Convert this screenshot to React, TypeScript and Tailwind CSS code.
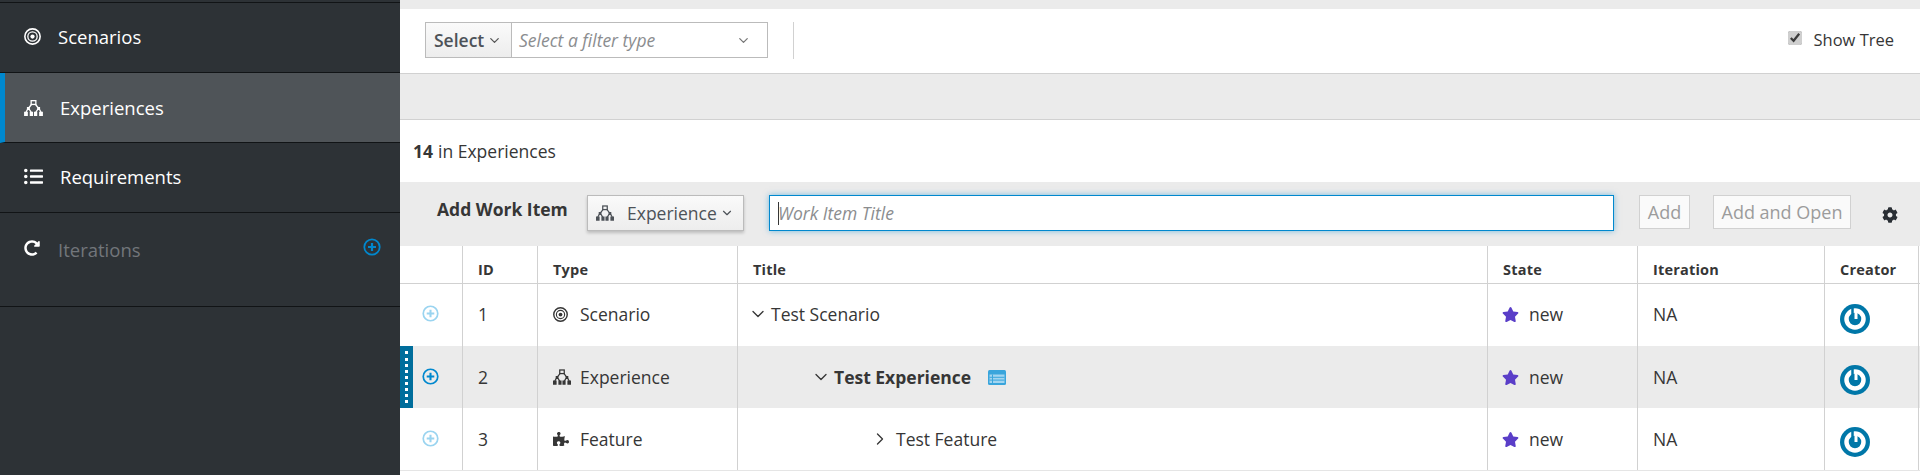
import React from 'react';
import { FaCog, FaListUl, FaPuzzlePiece, FaRedoAlt, FaStar } from 'react-icons/fa';
import { ChevronDown, ChevronRight } from 'lucide-react';

const TargetIcon = ({ className }: { className?: string }) => (
  <svg viewBox="0 0 16 16" className={className} fill="none" stroke="currentColor">
    <circle cx="8" cy="8" r="7.2" strokeWidth="1.5" />
    <circle cx="8" cy="8" r="4.4" strokeWidth="1.2" />
    <circle cx="8" cy="8" r="2" fill="currentColor" stroke="none" />
  </svg>
);

const TreeIcon = ({ className }: { className?: string }) => (
  <svg viewBox="0 0 20 17" className={className} fill="none" stroke="currentColor">
    <rect x="7.500" y="0.700" width="5" height="4" strokeWidth="1.400" />
    <path d="M8 4.500 4.500 9M12 4.500 15.500 9M4.500 8.500 2 13M4.500 8.500 7.500 13M15.500 8.500 12.500 13M15.500 8.500 18 13" strokeWidth="1.400" />
    <path d="M3 7.500h3v3H3zM14 7.500h3v3h-3zM0 12.500h4V17H0zM6 12.500h3.500V17H6zM10.500 12.500H14V17h-3.500zM16 12.500h4V17h-4z" fill="currentColor" stroke="none" />
  </svg>
);

const PlusCircle = ({ className }: { className?: string }) => (
  <svg viewBox="0 0 18 18" className={className} fill="none" stroke="currentColor">
    <circle cx="9" cy="9" r="7.700" strokeWidth="1.800" />
    <path d="M9 5v8M5 9h8" strokeWidth="2.200" />
  </svg>
);

const Avatar = () => (
  <svg viewBox="0 0 30 30" className="h-[30px] w-[30px]">
    <circle cx="15" cy="15" r="15" fill="#0077a8" />
    <circle cx="15" cy="15" r="8.500" fill="none" stroke="#ffffff" strokeWidth="4.500" />
    <path d="M12.500 3v10" stroke="#0077a8" strokeWidth="2.500" />
    <path d="M16 6v9" stroke="#ffffff" strokeWidth="3" />
  </svg>
);

const CardIcon = () => (
  <svg viewBox="0 0 18 15" className="h-[15px] w-[18px]">
    <rect width="18" height="15" rx="1.500" fill="#39a5dc" />
    <rect x="1.500" y="4.500" width="15" height="8.500" fill="#a2d5f0" />
    <path d="M4.500 4.500v8.500M1.500 7.300h15M1.500 10.100h15" stroke="#39a5dc" strokeWidth="1" />
  </svg>
);

const nav = [
  { label: 'Scenarios', icon: <TargetIcon className="h-[17px] w-[17px]" />, gap: 'ml-[17px]' },
  { label: 'Experiences', icon: <TreeIcon className="h-4 w-[19px]" />, gap: 'ml-[17px]', active: true },
  { label: 'Requirements', icon: <FaListUl className="h-[19px] w-[19px]" />, gap: 'ml-[17px]' },
];

const rows = [
  { id: 1, type: 'Scenario', icon: <TargetIcon className="h-[15px] w-[15px]" />, title: 'Test Scenario', indent: 'pl-0' },
  { id: 2, type: 'Experience', icon: <TreeIcon className="h-4 w-[18px]" />, title: 'Test Experience', indent: 'pl-[63px]', active: true },
  { id: 3, type: 'Feature', icon: <FaPuzzlePiece className="h-4 w-4" />, title: 'Test Feature', indent: 'pl-[125px]' },
];

const columns = 'grid grid-cols-[63px_75px_200px_750px_150px_187px_94px_1px]';
const cell = 'flex items-center border-r border-[#d1d1d1] pl-[15px]';

const App: React.FC = () => {
  return (
    <div className="flex h-[475px] w-[1920px] overflow-hidden bg-white font-['Open_Sans',sans-serif] text-[17.5px] text-[#363636]">
      <aside className="flex h-full w-[400px] shrink-0 flex-col bg-[#2d3236] pt-[2px] text-[18.5px] text-white">
        <div className="border-t border-[#111416]" />
        {nav.map((item) => (
          <div
            key={item.label}
            className={`flex h-[70px] items-center border-b border-[#111416] ${item.active ? 'border-l-[5px] border-l-[#0088ce] bg-[#4f5458] pl-[19px]' : 'pb-[2px] pl-[24px]'}`}
          >
            {item.icon}
            <span className={item.gap}>{item.label}</span>
          </div>
        ))}
        <div className="flex h-[94px] items-start border-b border-[#111416] pl-[24px] pt-[23px]">
          <FaRedoAlt className="mt-[4px] h-4 w-4" />
          <span className="ml-[18px] text-[#72767b]">Iterations</span>
          <PlusCircle className="ml-auto mr-[19px] mt-[2px] h-[18px] w-[18px] text-[#0088ce]" />
        </div>
      </aside>

      <main className="flex min-w-0 flex-1 flex-col">
        <div className="h-[9px] bg-[#ebebeb]" />
        <div className="flex h-[65px] items-start border-b border-[#d1d1d1] pl-[25px] pr-[25px] pt-[13px]">
          <div className="flex h-[36px] w-[343px] border border-[#bbbbbb]">
            <div className="flex w-[85px] items-center bg-gradient-to-b from-[#fafafa] to-[#ededed] pl-[8px] font-semibold text-[#4d5258]">
              Select
              <ChevronDown className="ml-[3px] h-[15px] w-[15px] text-[#555555]" />
            </div>
            <div className="flex flex-1 items-center border-l border-[#bbbbbb] pl-[7px] pr-[16px] italic text-[#8b8d8f]">
              Select a filter type
              <ChevronDown className="ml-auto h-[15px] w-[15px] text-[#777777]" />
            </div>
          </div>
          <div className="ml-[25px] h-[37px] w-px bg-[#d1d1d1]" />
          <label className="ml-auto mt-[6px] flex items-center text-[16.5px]">
            <input type="checkbox" defaultChecked className="mb-[5px] mr-[11px] h-[14px] w-[14px] accent-[#cfcfcf]" />
            <span className="mr-[1px]">Show Tree</span>
          </label>
        </div>
        <div className="h-[46px] border-b border-[#d1d1d1] bg-[#ebebeb]" />
        <div className="flex h-[62px] items-center pl-[13px]">
          <b className="font-bold">14</b>
          <span className="ml-[5px]">in Experiences</span>
        </div>
        <div className="flex h-[64px] items-start bg-[#ebebeb] pl-[37px] pt-[13px]">
          <span className="mt-[1px] w-[150px] font-bold">Add Work Item</span>
          <div className="flex h-[36px] w-[157px] items-center border border-[#bbbbbb] bg-gradient-to-b from-[#fafafa] to-[#ededed] pl-[8px] text-[#4d5258] shadow-[0_2px_3px_rgba(0,0,0,0.2)]">
            <TreeIcon className="h-4 w-[18px]" />
            <span className="ml-[13px]">Experience</span>
            <ChevronDown className="ml-[3px] h-[14px] w-[14px]" />
          </div>
          <div className="ml-[25px] flex h-[36px] w-[845px] items-center border border-[#0088ce] bg-white pl-[8px] italic text-[#8b8d8f] shadow-[0_0_6px_rgba(0,136,206,0.5)]">
            <span className="mr-[-1px] h-[23px] w-px bg-[#363636]" />
            Work Item Title
          </div>
          <div className="ml-[25px] flex h-[34px] w-[51px] items-center justify-center border border-[#d1d1d1] bg-[#fafafa] text-[18px] text-[#9c9c9c]">Add</div>
          <div className="ml-[23px] flex h-[34px] w-[138px] items-center justify-center border border-[#d1d1d1] bg-[#fafafa] text-[18px] text-[#9c9c9c]">Add and Open</div>
          <FaCog className="ml-[31px] mt-[12px] h-4 w-4 text-[#292e34]" />
        </div>

        <div className={`${columns} h-[38px] border-b border-[#d1d1d1] text-[14.5px] font-bold tracking-[0.2px]`}>
          <div className={cell} />
          <div className={`${cell} pt-[10px]`}>ID</div>
          <div className={`${cell} pt-[10px]`}>Type</div>
          <div className={`${cell} pt-[10px]`}>Title</div>
          <div className={`${cell} pt-[10px]`}>State</div>
          <div className={`${cell} pt-[10px]`}>Iteration</div>
          <div className={`${cell} pt-[10px]`}>Creator</div>
        </div>

        {rows.map((row) => {
          const lift = row.id === 1 ? 'pb-[2px]' : '';
          return (
            <div
              key={row.id}
              className={`${columns} ${row.active ? 'bg-[#ebebeb]' : ''} ${row.id === 3 ? 'h-[63px] border-b border-[#e5e5e5]' : 'h-[62px]'}`}
            >
              <div className="relative flex items-center border-r border-[#d1d1d1] pl-[22px]">
                {row.active && (
                  <div className="absolute bottom-0 left-0 top-0 flex w-[13px] justify-center bg-[#006e9c]">
                    <div className="my-[5px] w-[3px] border-l-[3px] border-dotted border-white" />
                  </div>
                )}
                <PlusCircle className={`${row.id === 1 ? 'mb-[4px]' : 'mb-[2px]'} h-[17px] w-[17px] ${row.active ? 'text-[#0088ce]' : 'text-[#9ad4f0]'}`} />
              </div>
              <div className={`${cell} ${lift}`}>{row.id}</div>
              <div className={`${cell} ${lift}`}>
                <span className="flex w-[27px]">{row.icon}</span>
                {row.type}
              </div>
              <div className={`${cell} ${lift}`}>
                <div className={`flex items-center ${row.indent}`}>
                  {row.id === 3 ? (
                    <ChevronRight className="-ml-[8px] h-5 w-5" strokeWidth={1.6} />
                  ) : (
                    <ChevronDown className="-ml-[5px] h-5 w-5" strokeWidth={1.6} />
                  )}
                  <span className={`${row.id === 3 ? 'ml-[6px]' : 'ml-[3px]'} ${row.active ? 'font-bold' : ''}`}>{row.title}</span>
                  {row.active && <span className="ml-[17px] flex"><CardIcon /></span>}
                </div>
              </div>
              <div className={`${cell} ${lift}`}>
                <FaStar className="-ml-[1px] h-[17px] w-[17px] text-[#5a3ec8]" />
                <span className="ml-[10px]">new</span>
              </div>
              <div className={`${cell} ${lift}`}>NA</div>
              <div className={`${cell} ${row.id === 1 ? 'pt-2' : 'pt-[6px]'}`}><Avatar /></div>
            </div>
          );
        })}
      </main>
    </div>
  );
};

export default App;
